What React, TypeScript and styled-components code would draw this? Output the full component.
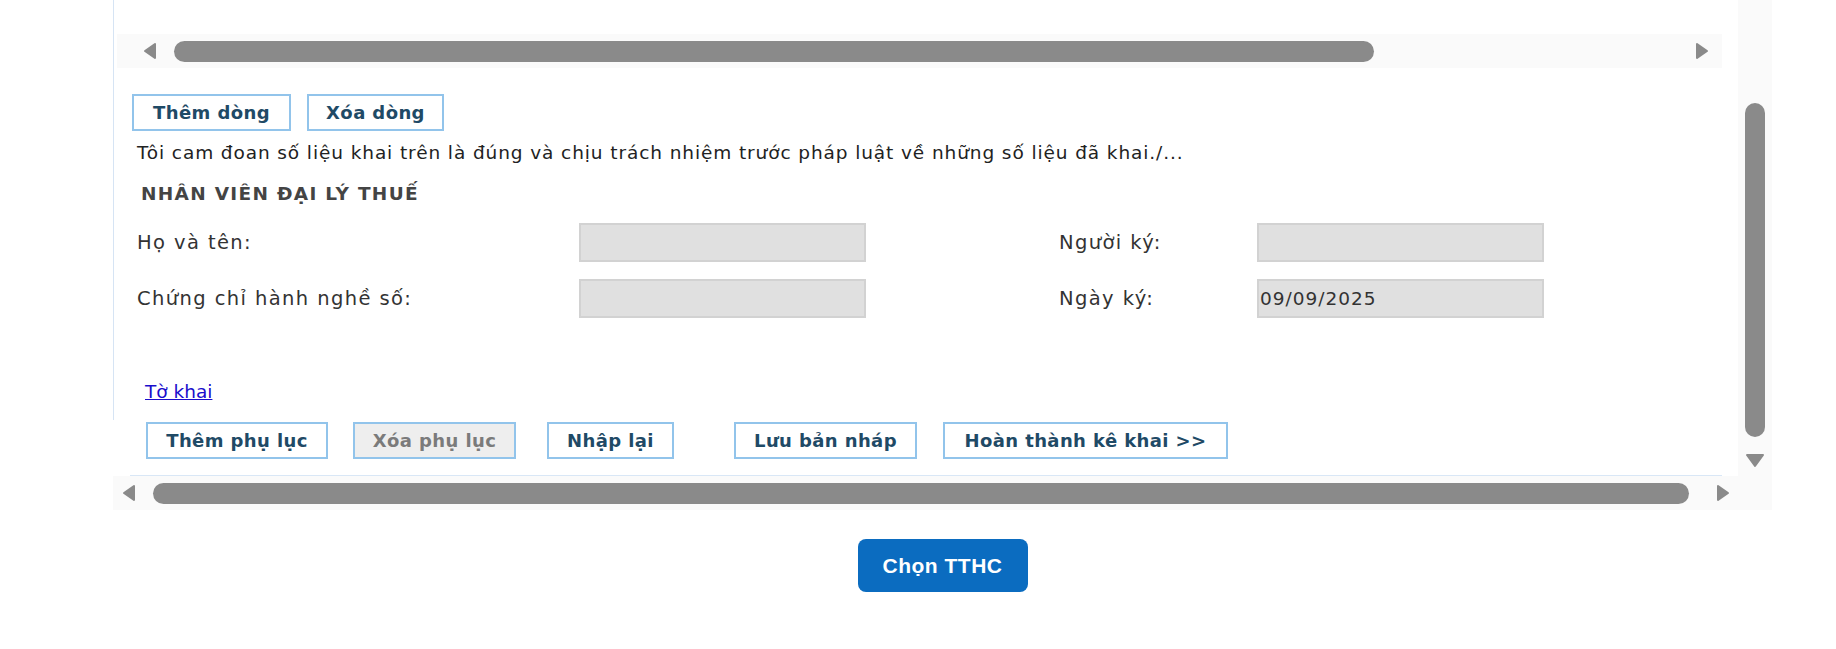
import * as React from 'react';
import styled, { createGlobalStyle } from 'styled-components';

const GlobalStyle = createGlobalStyle`
  body {
    margin: 0;
    background: #ffffff;
    font-family: 'DejaVu Sans', 'Liberation Sans', sans-serif;
    color: #2b2b2b;
  }
`;

const Page = styled.div`
  padding-left: 113px;
  width: 1659px;
`;

const Frame = styled.div`
  display: grid;
  grid-template-columns: 1fr 34px;
  grid-template-rows: 476px 34px;
`;

const Viewport = styled.div`
  display: flex;
  flex-direction: column;
  overflow: hidden;
`;

const Panel = styled.div`
  border-left: 1px solid #d6e4f4;
  height: 420px;
  padding-left: 3px;
  box-sizing: border-box;
  display: flex;
  flex-direction: column;
`;

const Track = styled.div<{ $top?: number }>`
  display: flex;
  align-items: center;
  background: #fafafa;
  height: 34px;
  margin-top: ${props => props.$top || 0}px;
  flex-shrink: 0;
`;

const InnerTrack = styled(Track)`
  width: 1605px;
  padding: 0 13px 0 26px;
  box-sizing: border-box;
`;

const BottomTrack = styled(Track)`
  padding: 0 8px 0 9px;
`;

const HThumb = styled.div<{ $width: number }>`
  width: ${props => props.$width}px;
  height: 21px;
  margin-left: 17px;
  border-radius: 11px;
  background: #8a8a8a;
`;

const Spacer = styled.div`
  flex: 1;
`;

const VTrack = styled.div`
  background: #fafafa;
  display: flex;
  flex-direction: column;
  align-items: center;
`;

const VThumb = styled.div`
  width: 20px;
  height: 334px;
  margin-top: 103px;
  border-radius: 10px;
  background: #8a8a8a;
`;

const DownArrowBox = styled.div`
  margin-top: 16px;
  line-height: 0;
`;

const Corner = styled.div`
  background: #fafafa;
`;

const ButtonRow = styled.div<{ $top: number; $left: number }>`
  display: flex;
  margin-top: ${props => props.$top}px;
  padding-left: ${props => props.$left}px;
  flex-shrink: 0;
`;

const FormButton = styled.button<{ $gap?: number; $width: number; $disabled?: boolean }>`
  width: ${props => props.$width}px;
  height: 37px;
  margin-left: ${props => props.$gap || 0}px;
  padding: 0;
  border: 2px solid #92c4eb;
  background: ${props => (props.$disabled ? '#eeeeee' : '#ffffff')};
  color: ${props => (props.$disabled ? '#7b7b7b' : '#1f4a66')};
  font-family: 'DejaVu Sans', sans-serif;
  font-weight: bold;
  font-size: 18px;
  letter-spacing: 0.4px;
  cursor: pointer;
`;

const Statement = styled.div`
  margin-top: 10px;
  padding-left: 20px;
  font-size: 18.5px;
  line-height: 24px;
  letter-spacing: 0.9px;
  color: #222;
`;

const Heading = styled.div`
  margin-top: 17px;
  padding-left: 24px;
  font-size: 18.5px;
  line-height: 24px;
  font-weight: bold;
  color: #444;
  letter-spacing: 1.3px;
`;

const FormGrid = styled.div`
  display: grid;
  grid-template-columns: 442px 480px 198px 287px;
  row-gap: 17px;
  margin-top: 17px;
  padding-left: 20px;
  align-items: center;
`;

const Label = styled.div`
  font-size: 19.5px;
  letter-spacing: 1.4px;
  color: #333;
`;

const Field = styled.div`
  width: 287px;
  height: 39px;
  border: 2px solid #d2d2d2;
  background: #e0e0e0;
  box-sizing: border-box;
  display: flex;
  align-items: center;
  padding-left: 1px;
  font-size: 18.5px;
  letter-spacing: 1px;
  color: #333;
`;

const DocLink = styled.a`
  margin-top: 62px;
  margin-left: 28px;
  font-size: 18.5px;
  line-height: 24px;
  color: #1a0dcc;
  text-decoration: underline;
  align-self: flex-start;
`;

const BottomLine = styled.div`
  margin-top: auto;
  margin-left: 17px;
  width: 1592px;
  height: 1px;
  background: #d9e7f6;
`;

const ChooseRow = styled.div`
  display: flex;
  justify-content: center;
  margin-top: 29px;
`;

const ChooseButton = styled.button`
  width: 170px;
  height: 53px;
  border: none;
  border-radius: 8px;
  background: #0b6cc0;
  color: #ffffff;
  font-family: 'Liberation Sans', Arial, sans-serif;
  font-weight: bold;
  font-size: 21px;
  letter-spacing: 0.5px;
  cursor: pointer;
`;

const Arrow = ({ dir }: { dir: 'left' | 'right' | 'down' }) => {
  const paths = {
    left: 'M12 2 L2 9 L12 16 Z',
    right: 'M2 2 L12 9 L2 16 Z',
    down: 'M2 2 L18 2 L10 13 Z',
  };
  const size = dir === 'down' ? { w: 20, h: 15 } : { w: 14, h: 18 };
  return (
    <svg width={size.w} height={size.h} viewBox={`0 0 ${size.w} ${size.h}`}>
      <path d={paths[dir]} fill="#8a8a8a" stroke="#8a8a8a" strokeWidth="2" strokeLinejoin="round" />
    </svg>
  );
};

const App = () => {
  return (
    <Page>
      <GlobalStyle />
      <Frame>
        <Viewport>
          <Panel>
            <InnerTrack $top={34}>
              <Arrow dir="left" />
              <HThumb $width={1200} />
              <Spacer />
              <Arrow dir="right" />
            </InnerTrack>
            <ButtonRow $top={26} $left={15}>
              <FormButton $width={159}>Thêm dòng</FormButton>
              <FormButton $width={137} $gap={16}>Xóa dòng</FormButton>
            </ButtonRow>
            <Statement>
              Tôi cam đoan số liệu khai trên là đúng và chịu trách nhiệm trước pháp luật về những số liệu đã khai./...
            </Statement>
            <Heading>NHÂN VIÊN ĐẠI LÝ THUẾ</Heading>
            <FormGrid>
              <Label>Họ và tên:</Label>
              <Field />
              <Label>Người ký:</Label>
              <Field />
              <Label>Chứng chỉ hành nghề số:</Label>
              <Field />
              <Label>Ngày ký:</Label>
              <Field>09/09/2025</Field>
            </FormGrid>
            <DocLink href="#">Tờ khai</DocLink>
          </Panel>
          <ButtonRow $top={2} $left={33}>
            <FormButton $width={182}>Thêm phụ lục</FormButton>
            <FormButton $width={163} $gap={25} $disabled>Xóa phụ lục</FormButton>
            <FormButton $width={127} $gap={31}>Nhập lại</FormButton>
            <FormButton $width={183} $gap={60}>Lưu bản nháp</FormButton>
            <FormButton $width={285} $gap={26}>Hoàn thành kê khai &gt;&gt;</FormButton>
          </ButtonRow>
          <BottomLine />
        </Viewport>
        <VTrack>
          <VThumb />
          <DownArrowBox>
            <Arrow dir="down" />
          </DownArrowBox>
        </VTrack>
        <BottomTrack>
          <Arrow dir="left" />
          <HThumb $width={1536} />
          <Spacer />
          <Arrow dir="right" />
        </BottomTrack>
        <Corner />
      </Frame>
      <ChooseRow>
        <ChooseButton>Chọn TTHC</ChooseButton>
      </ChooseRow>
    </Page>
  );
};

export default App;
